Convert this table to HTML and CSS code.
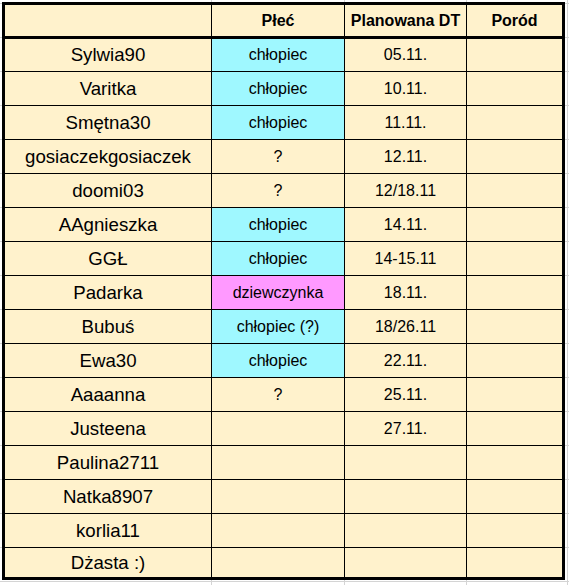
FILE: index.html
```html
<!DOCTYPE html>
<html lang="pl">
<head>
<meta charset="utf-8">
<title>Lista</title>
<link rel="stylesheet" href="styles.css">
</head>
<body>
<div class="sheet">
  <div class="grid">
    <div class="cell head"></div>
    <div class="cell head">Płeć</div>
    <div class="cell head">Planowana DT</div>
    <div class="cell head last">Poród</div>

    <div class="cell name">Sylwia90</div>
    <div class="cell sm boy">chłopiec</div>
    <div class="cell sm">05.11.</div>
    <div class="cell last"></div>

    <div class="cell name">Varitka</div>
    <div class="cell sm boy">chłopiec</div>
    <div class="cell sm">10.11.</div>
    <div class="cell last"></div>

    <div class="cell name">Smętna30</div>
    <div class="cell sm boy">chłopiec</div>
    <div class="cell sm">11.11.</div>
    <div class="cell last"></div>

    <div class="cell name">gosiaczekgosiaczek</div>
    <div class="cell sm">?</div>
    <div class="cell sm">12.11.</div>
    <div class="cell last"></div>

    <div class="cell name">doomi03</div>
    <div class="cell sm">?</div>
    <div class="cell sm">12/18.11</div>
    <div class="cell last"></div>

    <div class="cell name">AAgnieszka</div>
    <div class="cell sm boy">chłopiec</div>
    <div class="cell sm">14.11.</div>
    <div class="cell last"></div>

    <div class="cell name">GGŁ</div>
    <div class="cell sm boy">chłopiec</div>
    <div class="cell sm">14-15.11</div>
    <div class="cell last"></div>

    <div class="cell name">Padarka</div>
    <div class="cell sm girl">dziewczynka</div>
    <div class="cell sm">18.11.</div>
    <div class="cell last"></div>

    <div class="cell name">Bubuś</div>
    <div class="cell sm boy">chłopiec (?)</div>
    <div class="cell sm">18/26.11</div>
    <div class="cell last"></div>

    <div class="cell name">Ewa30</div>
    <div class="cell sm boy">chłopiec</div>
    <div class="cell sm">22.11.</div>
    <div class="cell last"></div>

    <div class="cell name">Aaaanna</div>
    <div class="cell sm">?</div>
    <div class="cell sm">25.11.</div>
    <div class="cell last"></div>

    <div class="cell name">Justeena</div>
    <div class="cell sm"></div>
    <div class="cell sm">27.11.</div>
    <div class="cell last"></div>

    <div class="cell name">Paulina2711</div>
    <div class="cell sm"></div>
    <div class="cell sm"></div>
    <div class="cell last"></div>

    <div class="cell name">Natka8907</div>
    <div class="cell sm"></div>
    <div class="cell sm"></div>
    <div class="cell last"></div>

    <div class="cell name">korlia11</div>
    <div class="cell sm"></div>
    <div class="cell sm"></div>
    <div class="cell last"></div>

    <div class="cell name bottom">Dżasta :)</div>
    <div class="cell sm bottom"></div>
    <div class="cell sm bottom"></div>
    <div class="cell last bottom"></div>
  </div>
</div>
</body>
</html>
```

FILE: styles.css
```css
html, body {
  margin: 0;
  padding: 0;
  background: #ffffff;
}

.sheet {
  width: 569px;
  height: 585px;
  box-sizing: border-box;
  padding: 2px 0 0 2px;
  overflow: hidden;
  background-color: #ffffff;
  background-image:
    linear-gradient(#d4d4d4, #d4d4d4),
    linear-gradient(#d4d4d4, #d4d4d4),
    linear-gradient(#d4d4d4, #d4d4d4),
    linear-gradient(#d4d4d4, #d4d4d4),
    repeating-linear-gradient(to bottom, transparent 0 3px, #d4d4d4 3px 4px, transparent 4px 34px);
  background-size: 1px 100%, 1px 100%, 1px 100%, 1px 100%, 100% 100%;
  background-position: 211px 0, 344px 0, 466px 0, 567px 0, 0 0;
  background-repeat: no-repeat;
  font-family: "Liberation Sans", Arial, sans-serif;
  color: #000;
}

.grid {
  display: grid;
  grid-template-columns: 207px 133px 122px 95px;
  grid-template-rows: 34px 33px repeat(14, 34px) 29px;
  width: max-content;
  border: 3px solid #000;
  background: #fff2cc;
}

.cell {
  box-sizing: border-box;
  display: flex;
  align-items: center;
  justify-content: center;
  border-right: 1px solid #000;
  border-bottom: 1px solid #000;
  font-size: 16px;
  white-space: nowrap;
}

.cell.last {
  border-right: none;
}

.cell.bottom {
  border-bottom: none;
}

.cell.head {
  font-weight: bold;
  font-size: 16px;
  border-bottom: 3px solid #000;
}

.cell.name {
  font-size: 18.67px;
}

.cell.boy {
  background: #9ff8ff;
}

.cell.girl {
  background: #ff99ff;
}
```
